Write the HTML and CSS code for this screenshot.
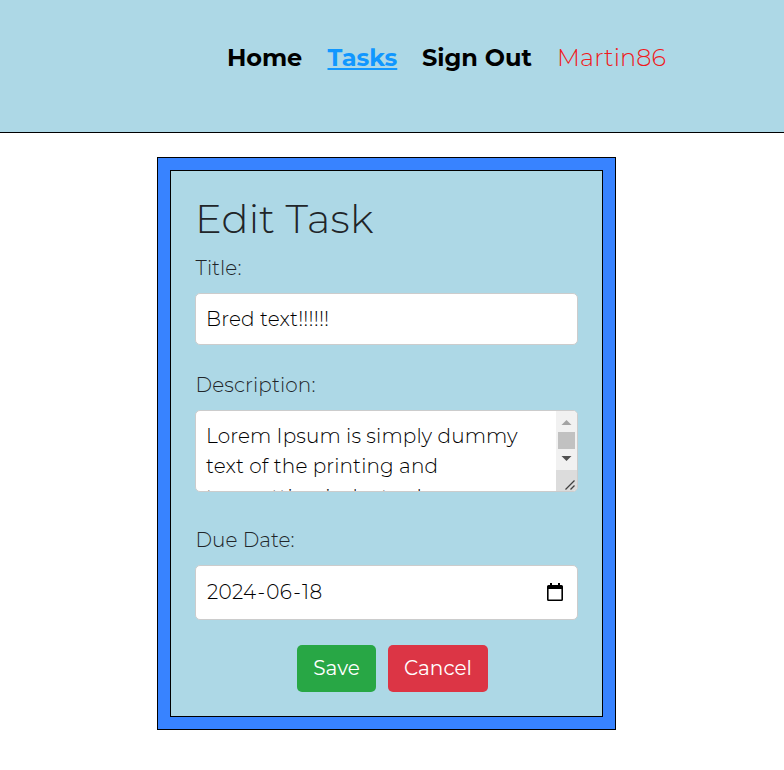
FILE: index.html
```html
<!DOCTYPE html>
<html lang="en">
<head>
<meta charset="utf-8">
<title>Edit Task</title>
<link rel="stylesheet" href="styles.css">
</head>
<body>
<header class="site-header">
  <nav class="nav">
    <a class="nav-link home">Home</a>
    <a class="nav-link tasks active">Tasks</a>
    <a class="nav-link signout">Sign Out</a>
    <span class="user">Martin86</span>
  </nav>
</header>
<main class="panel">
  <form class="task-form">
    <h1 class="heading">Edit Task</h1>
    <label class="label">Title:</label>
    <div class="field"><span class="title-value">Bred text!!!!!!</span></div>
    <label class="label">Description:</label>
    <div class="field textarea">
      <div class="textarea-text">
        <div>Lorem Ipsum is simply dummy</div>
        <div>text of the printing and</div>
        <div class="last-line">typesetting industry. Lorem</div>
      </div>
      <svg class="scrollbar" width="21" height="80" viewBox="0 0 21 80">
        <path fill="#f1f1f1" d="M0 0h21v59H0z"/>
        <path fill="#dcdcdc" d="M0 59h21v21H0z"/>
        <path fill="#a3a3a3" d="M5.500 14l5-5 5 5z"/>
        <path fill="#c1c1c1" d="M2 21h17v17H2z"/>
        <path fill="#505050" d="M5.500 45h10l-5 5z"/>
        <path stroke="#404040" stroke-width="1.300" fill="none" d="M9.500 78.500l9-9M14.500 78.500l4-4"/>
      </svg>
    </div>
    <label class="label due">Due Date:</label>
    <div class="field date">
      <div class="date-value"><span>2024</span>-<span>06</span>-<span>18</span></div>
      <svg class="calendar" width="16" height="18" viewBox="0 0 16 18">
        <path d="M3 0h2v2h6V0h2v2h1.500Q16 2 16 3.500v13Q16 18 14.500 18h-13Q0 18 0 16.500v-13Q0 2 1.500 2H3zM1.600 6v10.400h12.800V6z" fill-rule="evenodd"/>
      </svg>
    </div>
    <div class="actions">
      <button type="button" class="btn save">Save</button>
      <button type="button" class="btn cancel">Cancel</button>
    </div>
  </form>
</main>
</body>
</html>
```
FILE: styles.css
```css
* { box-sizing: border-box; }
body {
  margin: 0;
  background: #fff;
  color: #212529;
  font: 300 20px/30px Montserrat, Inter, sans-serif;
  letter-spacing: 0.120px;
}
.site-header {
  height: 133px;
  padding: 40px 0 0 227px;
  background: #add8e6;
  border-bottom: 1px solid #000;
}
.nav { display: flex; font-size: 24px; line-height: 36px; white-space: nowrap; letter-spacing: 0; }
.nav-link { color: #000; font-weight: 700; }
.home { width: 100.500px; letter-spacing: -0.100px; }
.tasks { width: 94.500px; }
.signout { width: 135px; }
.nav-link.active { color: #1097ff; text-decoration: underline; }
.user { color: #f01820; letter-spacing: 0.100px; }
.panel {
  width: 459px;
  height: 573px;
  margin: 24px 0 0 157px;
  padding: 12px;
  border: 1px solid #000;
  background: #3883ff;
}
.task-form {
  height: 547px;
  padding: 24px 24px 0;
  border: 1px solid #000;
  background: #add8e6;
}
.heading { margin: 0 0 10px; font-size: 40px; line-height: 48px; font-weight: 350; letter-spacing: 0.200px; }
.label { display: block; height: 30px; margin-bottom: 10px; padding-left: 0.500px; }
.field {
  display: flex;
  align-items: center;
  height: 52px;
  padding: 0 10px;
  margin-bottom: 25px;
  border: 1px solid #ccc;
  border-radius: 5px;
  background: #fff;
  color: #000;
  white-space: nowrap;
}
.title-value { letter-spacing: 0.150px; }
.textarea { height: 82px; align-items: flex-start; justify-content: space-between; padding: 0; margin-bottom: 33px; overflow: hidden; }
.textarea-text { padding: 10px; letter-spacing: 0.120px; }
.last-line { margin-top: 1px; }
.scrollbar { flex: none; }
.due { letter-spacing: 0.050px; }
.date { height: 55px; justify-content: space-between; padding: 0 14px 1px 10px; margin-bottom: 25px; }
.date-value { letter-spacing: 0.300px; }
.date-value span { padding: 0 1px; }
.actions { display: flex; gap: 12px; padding-left: 102px; }
.btn {
  height: 47px;
  padding: 0 0 1px;
  border: 0;
  border-radius: 5px;
  color: #fff;
  font: 400 20px/30px Montserrat, Inter, sans-serif;
}
.save { width: 79px; background: #28a745; }
.cancel { width: 100px; background: #dc3545; }
```
